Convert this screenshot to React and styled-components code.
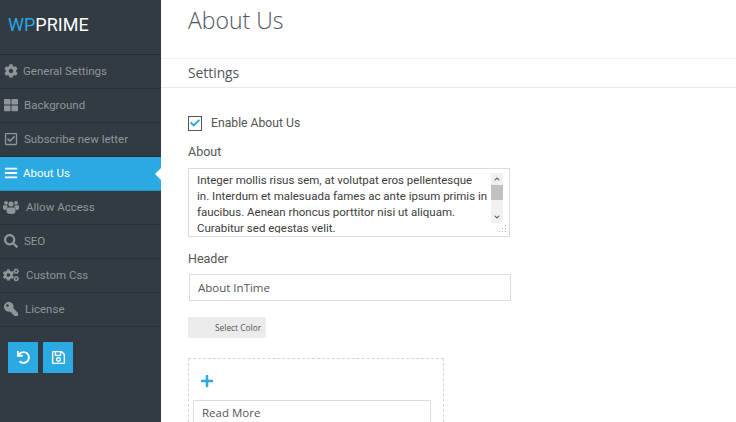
import React from 'react';
import styled, { createGlobalStyle } from 'styled-components';
import {
  FaCog, FaThLarge, FaRegCheckSquare, FaBars, FaSearch, FaCogs, FaKey,
  FaUndo, FaRegSave, FaPlus, FaCheck, FaChevronUp, FaChevronDown,
} from 'react-icons/fa';

const GlobalStyle = createGlobalStyle`
  html, body {
    margin: 0;
    padding: 0;
    background: #fff;
    overflow: hidden;
  }
  * { box-sizing: border-box; }
`;

const Page = styled.div`
  display: flex;
  width: 736px;
  height: 422px;
  overflow: hidden;
  font-family: Roboto, "Liberation Sans", sans-serif;
`;

const Sidebar = styled.aside`
  flex: 0 0 161px;
  background: #323a42;
  display: flex;
  flex-direction: column;
`;

const Logo = styled.div`
  height: 55px;
  padding: 14px 0 0 8px;
  font-size: 18px;
  font-weight: 400;
  line-height: 22px;
  color: #fff;
  border-bottom: 1px solid #272d33;
  span { color: #2aa7e0; }
`;

const MenuItem = styled.div`
  position: relative;
  height: 34px;
  display: flex;
  align-items: center;
  padding: 0 0 1px 3px;
  font-size: 11.5px;
  color: ${p => (p.$active ? '#fff' : '#8e969c')};
  background: ${p => (p.$active ? '#2ba9e1' : 'transparent')};
  border-bottom: 1px solid ${p => (p.$active ? '#2792c4' : '#2a3037')};
  svg {
    flex: none;
    width: 16px;
    height: 14px;
    color: ${p => (p.$active ? '#fff' : '#8e969c')};
  }
  &::after {
    content: '';
    display: ${p => (p.$active ? 'block' : 'none')};
    position: absolute;
    right: 0;
    top: 11px;
    border-style: solid;
    border-width: 6px 6px 6px 0;
    border-color: transparent #fff transparent transparent;
  }
`;

const MenuLabel = styled.span`
  margin-left: ${p => p.$gap}px;
`;

const ButtonRow = styled.div`
  display: flex;
  gap: 5px;
  padding: 15px 0 0 8px;
`;

const IconButton = styled.div`
  width: 30px;
  height: 31px;
  background: #2ba9e1;
  display: flex;
  align-items: center;
  justify-content: center;
  color: #fff;
  font-size: ${p => p.$size}px;
`;

const Main = styled.main`
  flex: 1;
  color: #555;
`;

const Title = styled.h1`
  margin: 0;
  height: 58px;
  padding: 4px 0 0 27px;
  font: 300 23px/33px "Open Sans", sans-serif;
  color: #4f565e;
`;

const SectionBar = styled.div`
  height: 30px;
  padding-left: 27px;
  border-top: 1px solid #f0f0f0;
  border-bottom: 1px solid #e8e8e8;
  font: 400 13.8px/28px "Open Sans", sans-serif;
  color: #50565c;
`;

const Form = styled.div`
  padding: 27px 0 0 27px;
`;

const CheckRow = styled.div`
  display: flex;
  align-items: center;
  gap: 9px;
  height: 16px;
  font-size: 12.2px;
  color: #555;
`;

const CheckBox = styled.div`
  width: 14px;
  height: 15px;
  border: 1px solid #555;
  display: flex;
  align-items: center;
  justify-content: center;
  color: #2ba9e1;
  font-size: 10px;
`;

const FieldLabel = styled.div`
  font-size: 12.5px;
  line-height: 16px;
  color: #555;
  margin-top: ${p => p.$top}px;
`;

const TextBox = styled.div`
  position: relative;
  display: flex;
  width: 322px;
  height: 69px;
  margin-top: 8px;
  border: 1px solid #dcdcdc;
  overflow: hidden;
`;

const TextContent = styled.div`
  width: 298px;
  height: 64px;
  overflow: hidden;
  white-space: nowrap;
  padding: 3px 0 0 8px;
  font-size: 11.5px;
  line-height: 16.1px;
  color: #3c3c3c;
  flex: none;
`;

const Scrollbar = styled.div`
  width: 12px;
  height: 50px;
  margin: 4px 0 0 4px;
  background: #f1f1f1;
  display: flex;
  flex-direction: column;
  align-items: center;
  color: #555;
  font-size: 6px;
`;

const ScrollArrow = styled.div`
  height: 12px;
  display: flex;
  align-items: center;
  margin-top: ${p => (p.$end ? 'auto' : '0')};
`;

const ScrollThumb = styled.div`
  width: 12px;
  height: 15px;
  background: #c1c1c1;
`;

const Grip = styled.svg`
  position: absolute;
  right: 2px;
  bottom: 2px;
`;

const TextInput = styled.div`
  width: 322px;
  height: 27px;
  margin: 7px 0 0 1px;
  padding-left: 8px;
  border: 1px solid #dcdcdc;
  font: 400 11.5px/25px "Open Sans", sans-serif;
  color: #555;
`;

const ColorButton = styled.div`
  width: 78px;
  height: 21px;
  margin-top: 16px;
  background: #ebebeb;
  border-radius: 2px;
  padding-left: 27px;
  font: 400 8.4px/21px "Open Sans", sans-serif;
  color: #555;
`;

const DashedBox = styled.div`
  width: 256px;
  height: 120px;
  margin: 20px 0 0 0;
  padding: 15px 12px 0 4px;
  border: 1px dashed #d5d5d5;
  border-bottom: 0;
`;

const AddIcon = styled.div`
  height: 14px;
  margin-left: 7px;
  color: #2ba9e1;
  font-size: 14px;
  line-height: 14px;
  svg { display: block; }
`;

const SmallInput = styled.div`
  width: 238px;
  height: 30px;
  margin-top: 12px;
  padding-left: 8px;
  border: 1px solid #dcdcdc;
  font: 400 11.5px/24px "Open Sans", sans-serif;
  color: #555;
`;

const FlippedKey = styled(FaKey)`
  transform: scaleX(-1);
`;

const GroupIcon = () => (
  <svg viewBox="0 0 16 14" fill="currentColor">
    <circle cx="8" cy="4" r="2.6" />
    <path d="M4.6 7.6h6.8c.6 0 1 .5 1 1.1v3.2c0 1-2 2-4.4 2s-4.4-1-4.4-2V8.7c0-.6.4-1.1 1-1.1z" />
    <circle cx="3" cy="2.8" r="1.9" />
    <circle cx="13" cy="2.8" r="1.9" />
    <path d="M0 6.2c0-.6.5-1 1-1h3c.2.7.6 1.2 1 1.6-1 .3-1.6 1-1.6 2v1.4C1.300 10 0 9.300 0 8.500z" />
    <path d="M16 6.200c0-.6-.5-1-1-1h-3c-.2.7-.6 1.200-1 1.600 1 .3 1.600 1 1.600 2v1.400c2.100-.2 3.400-.9 3.400-1.700z" />
  </svg>
);

const menu = [
  { label: 'General Settings', icon: FaCog, gap: 4 },
  { label: 'Background', icon: FaThLarge, gap: 5 },
  { label: 'Subscribe new letter', icon: FaRegCheckSquare, gap: 5 },
  { label: 'About Us', icon: FaBars, gap: 4, active: true },
  { label: 'Allow Access', icon: GroupIcon, gap: 7 },
  { label: 'SEO', icon: FaSearch, gap: 5 },
  { label: 'Custom Css', icon: FaCogs, gap: 7 },
  { label: 'License', icon: FlippedKey, gap: 6 },
];

export default function App() {
  return (
    <Page>
      <GlobalStyle />
      <Sidebar>
        <Logo><span>WP</span>PRIME</Logo>
        {menu.map(item => (
          <MenuItem key={item.label} $active={item.active}>
            <item.icon />
            <MenuLabel $gap={item.gap}>{item.label}</MenuLabel>
          </MenuItem>
        ))}
        <ButtonRow>
          <IconButton $size={13}><FaUndo /></IconButton>
          <IconButton $size={15}><FaRegSave /></IconButton>
        </ButtonRow>
      </Sidebar>
      <Main>
        <Title>About Us</Title>
        <SectionBar>Settings</SectionBar>
        <Form>
          <CheckRow>
            <CheckBox><FaCheck /></CheckBox>
            Enable About Us
          </CheckRow>
          <FieldLabel $top={13}>About</FieldLabel>
          <TextBox>
            <TextContent>
              Integer mollis risus sem, at volutpat eros pellentesque<br />
              in. Interdum et malesuada fames ac ante ipsum primis in<br />
              faucibus. Aenean rhoncus porttitor nisi ut aliquam.<br />
              Curabitur sed egestas velit.
            </TextContent>
            <Scrollbar>
              <ScrollArrow><FaChevronUp /></ScrollArrow>
              <ScrollThumb />
              <ScrollArrow $end><FaChevronDown /></ScrollArrow>
            </Scrollbar>
            <Grip width="9" height="9" viewBox="0 0 9 9" fill="#b5b5b5">
              <rect x="7" y="0" width="1" height="1" />
              <rect x="7" y="3" width="1" height="1" />
              <rect x="4" y="3" width="1" height="1" />
              <rect x="7" y="6" width="1" height="1" />
              <rect x="4" y="6" width="1" height="1" />
              <rect x="1" y="6" width="1" height="1" />
            </Grip>
          </TextBox>
          <FieldLabel $top={14}>Header</FieldLabel>
          <TextInput>About InTime</TextInput>
          <ColorButton>Select Color</ColorButton>
          <DashedBox>
            <AddIcon><FaPlus /></AddIcon>
            <SmallInput>Read More</SmallInput>
          </DashedBox>
        </Form>
      </Main>
    </Page>
  );
}
